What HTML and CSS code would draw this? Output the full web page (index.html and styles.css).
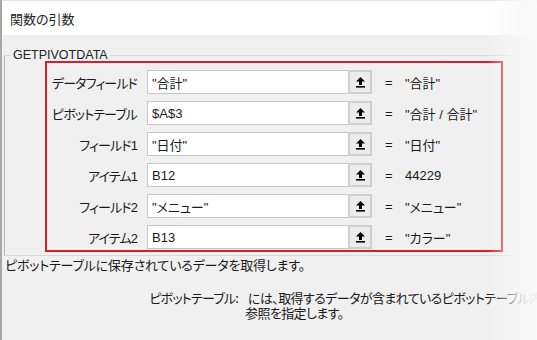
FILE: index.html
```html
<!DOCTYPE html>
<html lang="ja">
<head>
<meta charset="utf-8">
<link rel="stylesheet" href="styles.css">
</head>
<body>
<div class="window">
  <div class="titlebar">関数の引数</div>
  <div class="body">
    <fieldset class="group">
      <legend class="legend">GETPIVOTDATA</legend>
      <div class="args">
        <div class="row">
          <div class="label">データフィールド</div>
          <div class="field"><span class="input">"合計"</span><span class="btn"><svg width="11" height="12" viewBox="0 0 11 12"><path d="M5.5 1 L10 5.5 L7 5.5 L7 9 L4 9 L4 5.5 L1 5.5 Z" fill="#000"/><rect x="1" y="10" width="9" height="1.6" fill="#000"/></svg></span></div>
          <div class="eq">=</div>
          <div class="val">"合計"</div>
        </div>
        <div class="row">
          <div class="label">ピボットテーブル</div>
          <div class="field"><span class="input">$A$3</span><span class="btn"><svg width="11" height="12" viewBox="0 0 11 12"><path d="M5.5 1 L10 5.5 L7 5.5 L7 9 L4 9 L4 5.5 L1 5.5 Z" fill="#000"/><rect x="1" y="10" width="9" height="1.6" fill="#000"/></svg></span></div>
          <div class="eq">=</div>
          <div class="val">"合計 / 合計"</div>
        </div>
        <div class="row">
          <div class="label">フィールド1</div>
          <div class="field"><span class="input">"日付"</span><span class="btn"><svg width="11" height="12" viewBox="0 0 11 12"><path d="M5.5 1 L10 5.5 L7 5.5 L7 9 L4 9 L4 5.5 L1 5.5 Z" fill="#000"/><rect x="1" y="10" width="9" height="1.6" fill="#000"/></svg></span></div>
          <div class="eq">=</div>
          <div class="val">"日付"</div>
        </div>
        <div class="row">
          <div class="label">アイテム1</div>
          <div class="field"><span class="input">B12</span><span class="btn"><svg width="11" height="12" viewBox="0 0 11 12"><path d="M5.5 1 L10 5.5 L7 5.5 L7 9 L4 9 L4 5.5 L1 5.5 Z" fill="#000"/><rect x="1" y="10" width="9" height="1.6" fill="#000"/></svg></span></div>
          <div class="eq">=</div>
          <div class="val">44229</div>
        </div>
        <div class="row">
          <div class="label">フィールド2</div>
          <div class="field"><span class="input">"メニュー"</span><span class="btn"><svg width="11" height="12" viewBox="0 0 11 12"><path d="M5.5 1 L10 5.5 L7 5.5 L7 9 L4 9 L4 5.5 L1 5.5 Z" fill="#000"/><rect x="1" y="10" width="9" height="1.6" fill="#000"/></svg></span></div>
          <div class="eq">=</div>
          <div class="val">"メニュー"</div>
        </div>
        <div class="row">
          <div class="label">アイテム2</div>
          <div class="field"><span class="input">B13</span><span class="btn"><svg width="11" height="12" viewBox="0 0 11 12"><path d="M5.5 1 L10 5.5 L7 5.5 L7 9 L4 9 L4 5.5 L1 5.5 Z" fill="#000"/><rect x="1" y="10" width="9" height="1.6" fill="#000"/></svg></span></div>
          <div class="eq">=</div>
          <div class="val">"カラー"</div>
        </div>
      </div>
    </fieldset>
    <div class="desc">ピボットテーブルに保存されているデータを取得します。</div>
    <div class="argdesc">
      <div class="argname">ピボットテーブル:</div>
      <div class="argtext">には、取得するデータが含まれているピボットテーブル内の<br>参照を指定します。</div>
    </div>
  </div>
  <div class="fade"></div>
</div>
</body>
</html>
```

FILE: styles.css
```css
html, body {
  margin: 0;
  padding: 0;
}
body {
  width: 537px;
  height: 340px;
  overflow: hidden;
  background: #f0f0f0;
  font-family: "Liberation Sans", "Noto Sans CJK JP", sans-serif;
  font-size: 13px;
  color: #1a1a1a;
  font-feature-settings: "palt";
}
.window {
  position: relative;
  width: 537px;
  height: 340px;
  border-left: 2px solid #a8a8a8;
  box-sizing: border-box;
  background: #f0f0f0;
  overflow: hidden;
}
.titlebar {
  height: 35px;
  background: #ffffff;
  border-top: 1px solid #e4e4e4;
  box-sizing: border-box;
  display: flex;
  align-items: center;
  padding-left: 8px;
  font-size: 13px;
  color: #222;
}
.body {
  padding-top: 14px;
}
.group {
  margin: 0 26px 0 2px;
  padding: 0 0 3px 0;
  border: 1px solid #dadada;
  border-left-color: #b8b8b8;
  border-right-color: #e8e8e8;
}
.legend {
  margin-left: 6px;
  padding: 0 2px;
  font-size: 12.5px;
  line-height: 12px;
  color: #222;
}
.args {
  margin-left: 40px;
  width: 458px;
  box-sizing: border-box;
  border: 2px solid #d4202c;
  padding: 7px 0 1px 0;
  display: flex;
  flex-direction: column;
  gap: 7px;
}
.row {
  display: flex;
  align-items: center;
  height: 24px;
}
.label {
  flex: none;
  width: 90px;
  text-align: right;
  letter-spacing: -0.9px;
  white-space: nowrap;
}
.field {
  flex: none;
  margin-left: 10px;
  display: flex;
  height: 24px;
}
.input {
  width: 201px;
  box-sizing: border-box;
  height: 24px;
  background: #fff;
  border: 1px solid #c6c6c6;
  border-right: none;
  padding-left: 4px;
  display: flex;
  align-items: center;
}
.btn {
  width: 24px;
  height: 24px;
  box-sizing: border-box;
  background: #ececec;
  border: 2px solid #cfcfcf;
  display: flex;
  align-items: center;
  justify-content: center;
}
.eq {
  flex: none;
  margin-left: 13px;
  width: 20px;
}
.val {
  white-space: nowrap;
}
.desc {
  margin-top: -1px;
  padding-left: 3px;
  letter-spacing: -0.2px;
}
.argdesc {
  display: flex;
  margin-top: 16px;
  font-family: "Noto Sans CJK JP", sans-serif;
  line-height: 15px;
}
.argname {
  flex: none;
  width: 236px;
  text-align: right;
  white-space: nowrap;
  letter-spacing: -0.8px;
}
.argtext {
  flex: none;
  margin-left: 7px;
  text-indent: 3px;
  white-space: nowrap;
  letter-spacing: -0.6px;
}
.fade {
  position: absolute;
  top: 0;
  right: 0;
  width: 50px;
  height: 340px;
  background: linear-gradient(to right, rgba(248,248,248,0) 0%, rgba(248,248,248,0.85) 70%, rgba(250,250,250,0.95) 100%);
}
```
